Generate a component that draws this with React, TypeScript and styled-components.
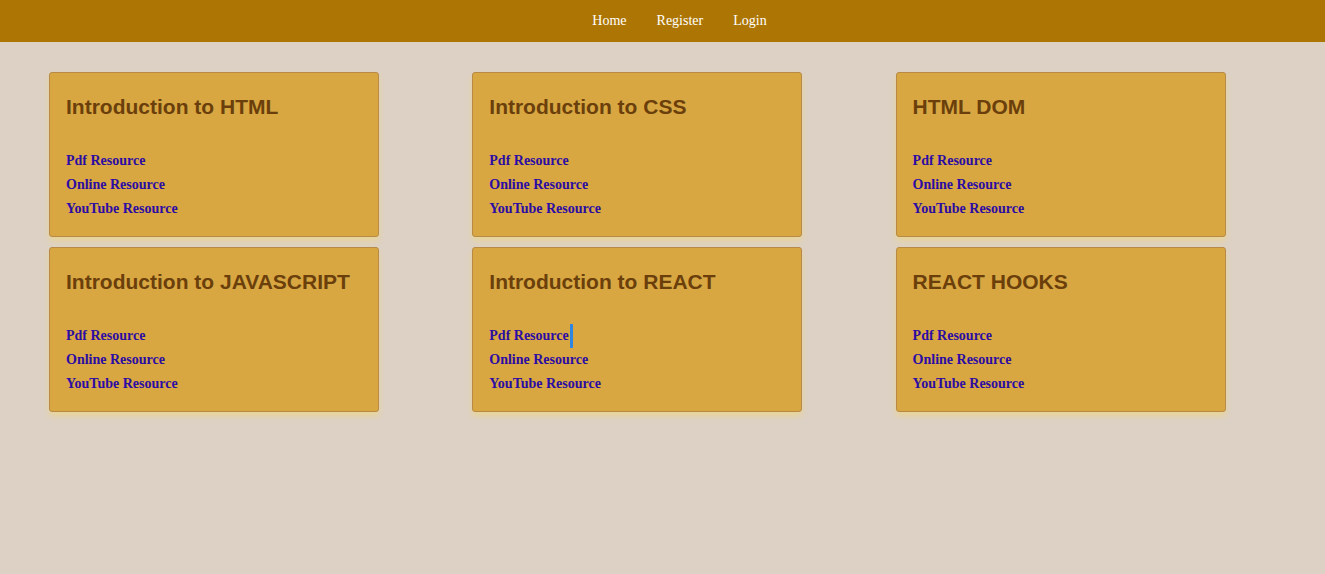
import styled, { createGlobalStyle } from "styled-components"

const courses = [
    { title: 'Introduction to HTML' },
    { title: 'Introduction to CSS' },
    { title: 'HTML DOM' },
    { title: 'Introduction to JAVASCRIPT' },
    { title: 'Introduction to REACT', caret: true },
    { title: 'REACT HOOKS' },
]

const resources = ['Pdf Resource', 'Online Resource', 'YouTube Resource']

const GlobalStyle = createGlobalStyle`
    * {
        box-sizing: border-box;
    }
    html, body {
        margin: 0;
        padding: 0;
        background: #ddd1c6;
        font-family: "Liberation Serif", "Times New Roman", serif;
    }
`

const Page = styled.div`
    min-height: 574px;
    background: #ddd1c6;
`

const NavBar = styled.nav`
    height: 42px;
    background: #ad7604;
    display: flex;
    justify-content: center;
    align-items: center;
    padding-bottom: 2px;
`

const NavList = styled.ul`
    display: flex;
    flex-direction: row;
    list-style: none;
    margin: 0;
    padding: 0 0 0 34px;
`

const NavItem = styled.li`
    padding: 0 15px;
`

const NavLink = styled.a`
    color: #ffffff;
    font-size: 14px;
    line-height: 18px;
    text-decoration: none;
    cursor: pointer;
`

const Grid = styled.div`
    display: grid;
    grid-template-columns: repeat(3, 330px);
    column-gap: 93.3px;
    row-gap: 10px;
    padding: 30px 0 0 49px;
`

const Card = styled.div`
    height: 165px;
    background: #d8a742;
    border: 1px solid #b88a45;
    border-radius: 3px;
    box-shadow: 0 4px 6px rgba(240, 215, 120, 0.6);
    padding: 22px 16px 0 16px;
`

const Title = styled.h3`
    margin: 0;
    font-family: "Liberation Sans", Arial, sans-serif;
    font-weight: bold;
    font-size: 21px;
    line-height: 24px;
    color: #6b3f0b;
`

const LinkList = styled.div`
    display: flex;
    flex-direction: column;
    margin-top: 30px;
`

const ResourceLink = styled.a`
    display: block;
    font-weight: bold;
    font-size: 14px;
    line-height: 24px;
    color: #2c0ca2;
    text-decoration: none;
    cursor: pointer;
`

const Caret = styled.span`
    display: inline-block;
    width: 3px;
    height: 24px;
    margin-left: 1px;
    vertical-align: top;
    background: #2f86e0;
`

const App = () => {
    return (
        <Page>
            <GlobalStyle />
            <NavBar>
                <NavList>
                    <NavItem><NavLink>Home</NavLink></NavItem>
                    <NavItem><NavLink>Register</NavLink></NavItem>
                    <NavItem><NavLink>Login</NavLink></NavItem>
                </NavList>
            </NavBar>
            <Grid>
                {courses.map(course => (
                    <Card key={course.title}>
                        <Title>{course.title}</Title>
                        <LinkList>
                            {resources.map((name, i) => (
                                <ResourceLink key={name}>
                                    {name}
                                    {course.caret && i === 0 && <Caret />}
                                </ResourceLink>
                            ))}
                        </LinkList>
                    </Card>
                ))}
            </Grid>
        </Page>
    )
}

export default App
